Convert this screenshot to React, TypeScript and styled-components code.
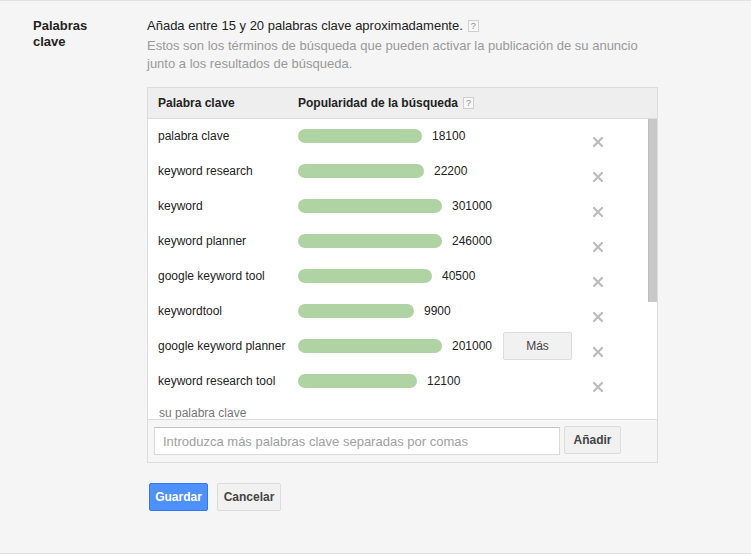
import React from "react";
import styled, { createGlobalStyle } from "styled-components";

const Global = createGlobalStyle`
  html, body { margin: 0; padding: 0; background: #ffffff; }
  body { font-family: "Liberation Sans", Arial, sans-serif; color: #222; }
  * { box-sizing: border-box; }
`;

const Page = styled.div`
  height: 554px;
  background: #f5f5f5;
  border-top: 1px solid #e2e2e2;
  border-bottom: 1px solid #e2e2e2;
  display: grid;
  grid-template-columns: 114px 511px;
  padding: 16px 0 0 33px;
  align-items: start;
`;

const Label = styled.div`
  font-size: 13px;
  font-weight: bold;
  line-height: 16px;
  width: 70px;
  padding-top: 1px;
  color: #222;
`;

const Content = styled.div`
  display: flex;
  flex-direction: column;
`;

const Lead = styled.div`
  font-size: 13px;
  line-height: 18px;
  color: #222;
  margin-bottom: 2px;
  display: flex;
  align-items: center;
  gap: 5px;
`;

const Hint = styled.div`
  font-size: 13px;
  line-height: 18px;
  color: #999;
`;

const Help = styled.span`
  display: inline-flex;
  align-items: center;
  justify-content: center;
  width: 11px;
  height: 12px;
  border: 1px solid #cfcfcf;
  background: #f7f7f7;
  color: #8a8a8a;
  font-size: 9px;
  font-weight: normal;
  line-height: 1;
`;

const Panel = styled.div`
  margin-top: 14px;
  border: 1px solid #dcdcdc;
  background: #fff;
  display: flex;
  flex-direction: column;
`;

const Header = styled.div`
  height: 31px;
  background: #eeeeee;
  border-bottom: 1px solid #dcdcdc;
  display: flex;
  align-items: center;
  padding-left: 10px;
  font-size: 12px;
  font-weight: bold;
  color: #222;
`;

const HeadCell = styled.div<{ $w?: number }>`
  ${(p) => (p.$w ? `width: ${p.$w}px;` : "")}
  display: flex;
  align-items: center;
  gap: 5px;
`;

const Body = styled.div`
  height: 300px;
  display: flex;
  background: #fff;
`;

const List = styled.div`
  flex: 1;
  overflow: hidden;
`;

const Track = styled.div`
  width: 9px;
  background: #fff;
  display: flex;
  flex-direction: column;
`;

const Thumb = styled.div`
  height: 183px;
  background: #c8c8c8;
  border-left: 1px solid #bdbdbd;
`;

const Row = styled.div`
  height: 35px;
  display: flex;
  align-items: center;
  padding-left: 10px;
  margin-top: -1px;
  margin-bottom: 1px;
  font-size: 12px;
  color: #222;
`;

const Keyword = styled.div<{ $muted?: boolean }>`
  width: 140px;
  color: ${(p) => (p.$muted ? "#777" : "#222")};
  white-space: nowrap;
  ${(p) => (p.$muted ? "padding-left: 1px; margin-bottom: 6px;" : "")}
`;

const Popularity = styled.div`
  width: 205px;
  display: flex;
  align-items: center;
  gap: 10px;
`;

const Bar = styled.div`
  height: 14px;
  border-radius: 7px;
  background: #b0d3a4;
  margin-top: 1px;
`;

const MoreCell = styled.div`
  width: 90px;
  display: flex;
  align-items: center;
`;

const GrayButton = styled.button<{ $bold?: boolean; $w: number }>`
  width: ${(p) => p.$w}px;
  height: 28px;
  background: #f1f1f1;
  border: 1px solid #dcdcdc;
  border-radius: 2px;
  color: #444;
  font-family: "Liberation Sans", Arial, sans-serif;
  font-size: 12px;
  font-weight: ${(p) => (p.$bold ? "bold" : "normal")};
  padding: 0;
  cursor: pointer;
`;

const Remove = styled.div`
  width: 10px;
  height: 10px;
  margin-top: 13px;
  display: flex;
`;

const Footer = styled.div`
  border-top: 1px solid #dcdcdc;
  background: #f5f5f5;
  padding: 6px 0 7px 6px;
  display: flex;
  align-items: flex-start;
  gap: 4px;
`;

const Input = styled.input`
  width: 406px;
  height: 28px;
  border: 1px solid #d9d9d9;
  border-top-color: #c0c0c0;
  background: #fff;
  padding: 0 8px;
  font-family: "Liberation Sans", Arial, sans-serif;
  font-size: 13px;
  color: #222;
  margin-top: 1px;
  outline: none;
  &::placeholder { color: #a0a0a0; }
`;

const Actions = styled.div`
  margin-top: 20px;
  padding-left: 2px;
  display: flex;
  gap: 9px;
`;

const PrimaryButton = styled.button`
  width: 59px;
  height: 28px;
  background: #4d90fe;
  border: 1px solid #3079ed;
  border-radius: 2px;
  color: #fff;
  font-family: "Liberation Sans", Arial, sans-serif;
  font-size: 12px;
  font-weight: bold;
  padding: 0;
`;

const XIcon = () => (
  <svg width="10" height="10" viewBox="0 0 10 10">
    <path d="M1 1 L9 9 M9 1 L1 9" stroke="#bcbcbc" strokeWidth="2.2" strokeLinecap="square" />
  </svg>
);

const keywords = [
  { k: "palabra clave", v: "18100", w: 124 },
  { k: "keyword research", v: "22200", w: 126 },
  { k: "keyword", v: "301000", w: 144 },
  { k: "keyword planner", v: "246000", w: 144 },
  { k: "google keyword tool", v: "40500", w: 134 },
  { k: "keywordtool", v: "9900", w: 116 },
  { k: "google keyword planner", v: "201000", w: 144, more: true },
  { k: "keyword research tool", v: "12100", w: 119 },
];

export default function App() {
  return (
    <>
      <Global />
      <Page>
        <Label>Palabras clave</Label>
        <Content>
          <Lead>
            Añada entre 15 y 20 palabras clave aproximadamente. <Help>?</Help>
          </Lead>
          <Hint>
            Estos son los términos de búsqueda que pueden activar la publicación de su anuncio
            junto a los resultados de búsqueda.
          </Hint>
          <Panel>
            <Header>
              <HeadCell $w={140}>Palabra clave</HeadCell>
              <HeadCell>
                Popularidad de la búsqueda <Help>?</Help>
              </HeadCell>
            </Header>
            <Body>
              <List>
                {keywords.map((r) => (
                  <Row key={r.k}>
                    <Keyword>{r.k}</Keyword>
                    <Popularity>
                      <Bar style={{ width: r.w }} />
                      <span>{r.v}</span>
                    </Popularity>
                    <MoreCell>{r.more && <GrayButton $w={69}>Más</GrayButton>}</MoreCell>
                    <Remove>
                      <XIcon />
                    </Remove>
                  </Row>
                ))}
                <Row>
                  <Keyword $muted>su palabra clave</Keyword>
                </Row>
              </List>
              <Track>
                <Thumb />
              </Track>
            </Body>
            <Footer>
              <Input placeholder="Introduzca más palabras clave separadas por comas" />
              <GrayButton $bold $w={57}>
                Añadir
              </GrayButton>
            </Footer>
          </Panel>
          <Actions>
            <PrimaryButton>Guardar</PrimaryButton>
            <GrayButton $bold $w={64}>
              Cancelar
            </GrayButton>
          </Actions>
        </Content>
      </Page>
    </>
  );
}
